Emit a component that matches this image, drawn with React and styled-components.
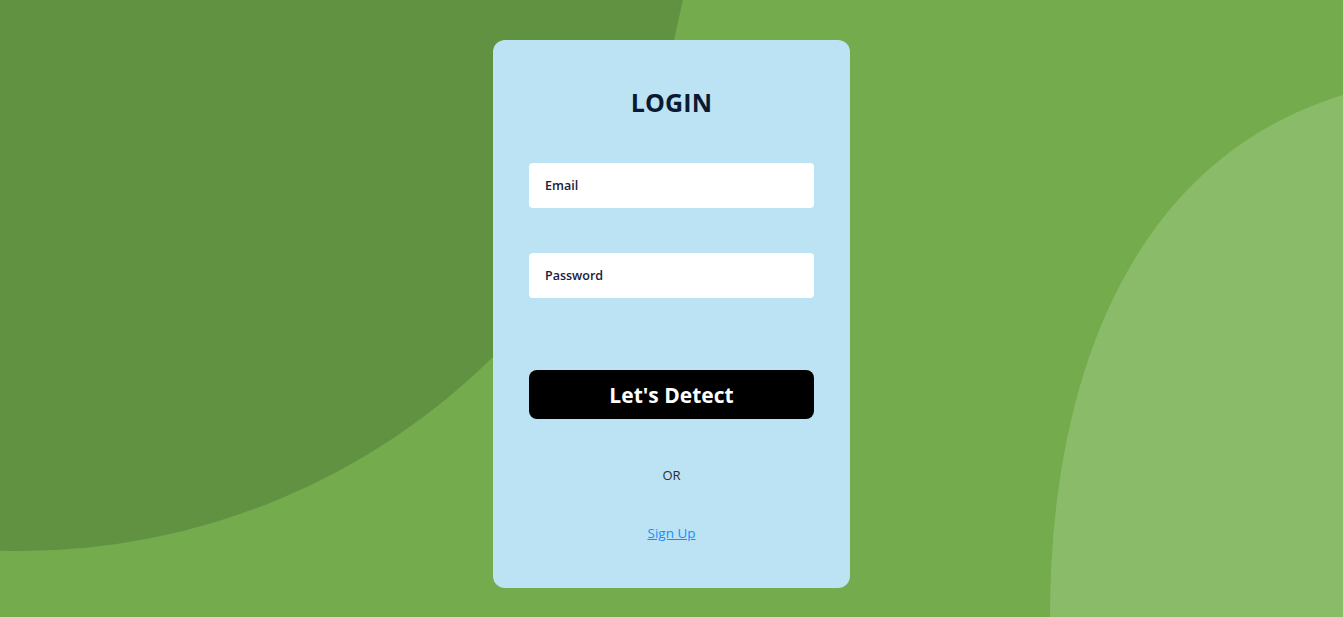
import React from "react";
import styled, { createGlobalStyle } from "styled-components";

const GlobalStyle = createGlobalStyle`
  html, body {
    margin: 0;
    padding: 0;
    height: 100%;
  }
  body {
    font-family: "Open Sans", "Noto Sans", sans-serif;
    background-color: #74ab4d;
    overflow: hidden;
  }
`;

function Backdrop() {
  return (
    <Scene.Art viewBox="0 0 1343 617" preserveAspectRatio="none" aria-hidden="true">
      <circle cx="20" cy="-123" r="674" fill="#619242" />
      <path d="M1050 617 C1050 380 1130 160 1343 95 L1343 617 Z" fill="#8abb69" />
    </Scene.Art>
  );
}

function App() {
  return (
    <>
      <GlobalStyle />
      <Scene.Wrapper>
        <Backdrop />
        <Login.Card>
          <Login.Title>LOGIN</Login.Title>
          <Login.Input type="email" placeholder="Email" />
          <Login.Input type="password" placeholder="Password" />
          <Login.Button type="button">Let's Detect</Login.Button>
          <Login.Or>OR</Login.Or>
          <Login.Link href="#signup">Sign Up</Login.Link>
        </Login.Card>
      </Scene.Wrapper>
    </>
  );
}

const Scene = {
  Wrapper: styled.div`
    position: relative;
    width: 100vw;
    height: 100vh;
    min-height: 617px;
    display: flex;
    justify-content: center;
    align-items: flex-start;
    padding-top: 40px;
    box-sizing: border-box;
    overflow: hidden;
  `,

  Art: styled.svg`
    position: absolute;
    inset: 0;
    width: 100%;
    height: 100%;
    z-index: 0;
  `
};

const Login = {
  Card: styled.div`
    position: relative;
    z-index: 1;
    width: 357px;
    height: 548px;
    box-sizing: border-box;
    padding: 47px 36px 0;
    background-color: #bbe3f4;
    border-radius: 12px;
    display: flex;
    flex-direction: column;
    align-items: center;
  `,

  Title: styled.h1`
    margin: 0;
    font-size: 25px;
    line-height: 31px;
    font-weight: 700;
    color: #0b1a33;
    letter-spacing: 0.2px;
  `,

  Input: styled.input`
    width: 100%;
    height: 45px;
    margin-top: 45px;
    box-sizing: border-box;
    padding: 0 16px;
    border: none;
    border-radius: 4px;
    background: #ffffff;
    font-family: inherit;
    font-size: 12.5px;
    font-weight: 600;
    color: #111827;
    outline: none;

    &::placeholder {
      color: #16213a;
      opacity: 1;
    }
  `,

  Button: styled.button`
    width: 100%;
    height: 49px;
    margin-top: 72px;
    border: none;
    border-radius: 8px;
    background: #000000;
    color: #ffffff;
    font-family: inherit;
    font-size: 21px;
    font-weight: 700;
    cursor: pointer;
  `,

  Or: styled.p`
    margin: 47px 0 0;
    font-size: 13px;
    line-height: 18px;
    color: #2b2b3a;
  `,

  Link: styled.a`
    margin-top: 40px;
    font-size: 13.5px;
    line-height: 19px;
    color: #1a8cff;
    text-decoration: underline;
  `
};

export default App;
